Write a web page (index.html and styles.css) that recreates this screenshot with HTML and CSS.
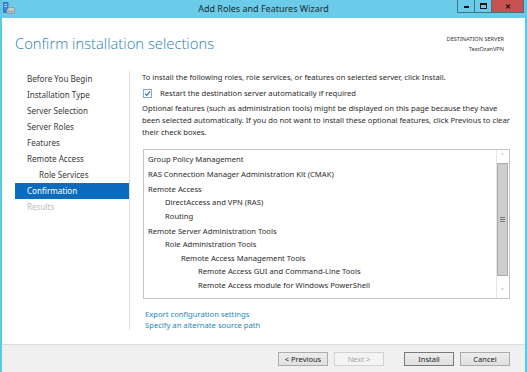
FILE: index.html
```html
<!DOCTYPE html>
<html lang="en">
<head>
    <meta charset="UTF-8">
    <meta name="viewport" content="width=device-width, initial-scale=1.0">
    <title>Add Roles and Features Wizard</title>
    <link rel="stylesheet" href="styles.css">
</head>
<body>
    <div class="window">
        <div class="titlebar">
            <svg class="app-icon" width="12" height="12" viewBox="0 0 12 12">
                <rect x="0.5" y="0.5" width="4.5" height="10" fill="#3d86d6" stroke="#1f5fa8" stroke-width="0.6"/>
                <rect x="1.3" y="2" width="2.8" height="0.8" fill="#cfe6ff"/>
                <rect x="1.3" y="4" width="2.8" height="0.8" fill="#cfe6ff"/>
                <path d="M4 7.5 L6 5.5 H11 L11.5 7.5 V11.5 H4 Z" fill="#c9ced4" stroke="#7d858e" stroke-width="0.6"/>
                <rect x="5" y="8.5" width="5.5" height="2" fill="#9aa3ad"/>
            </svg>
            <div class="title">Add Roles and Features Wizard</div>
            <div class="controls">
                <span class="ctl min"><i></i></span>
                <span class="ctl max"><i></i></span>
                <span class="ctl close">&#x2715;</span>
            </div>
        </div>

        <div class="client">
            <div class="header">
                <h1>Confirm installation selections</h1>
                <div class="dest">
                    <div>DESTINATION SERVER</div>
                    <div>TestOzanVPN</div>
                </div>
            </div>

            <div class="main">
                <ul class="nav">
                    <li>Before You Begin</li>
                    <li>Installation Type</li>
                    <li>Server Selection</li>
                    <li>Server Roles</li>
                    <li>Features</li>
                    <li>Remote Access</li>
                    <li class="sub">Role Services</li>
                    <li class="active">Confirmation</li>
                    <li class="disabled">Results</li>
                </ul>

                <div class="content">
                    <p class="intro">To install the following roles, role services, or features on selected server, click Install.</p>
                    <label class="check">
                        <svg width="9" height="9" viewBox="0 0 9 9">
                            <rect x="0.5" y="0.5" width="8" height="8" fill="#fff" stroke="#8aa9c8"/>
                            <path d="M2 4.6 L3.8 6.4 L7.1 2.4" fill="none" stroke="#2c6cb0" stroke-width="1.1"/>
                        </svg>
                        Restart the destination server automatically if required
                    </label>
                    <p class="note">Optional features (such as administration tools) might be displayed on this page because they have been selected automatically. If you do not want to install these optional features, click Previous to clear their check boxes.</p>

                    <div class="selection">
                        <ul class="tree">
                            <li class="group">Group Policy Management</li>
                            <li class="group">RAS Connection Manager Administration Kit (CMAK)</li>
                            <li class="group">Remote Access</li>
                            <li class="l2">DirectAccess and VPN (RAS)</li>
                            <li class="l2">Routing</li>
                            <li class="group">Remote Server Administration Tools</li>
                            <li class="l2">Role Administration Tools</li>
                            <li class="l3">Remote Access Management Tools</li>
                            <li class="l4">Remote Access GUI and Command-Line Tools</li>
                            <li class="l4">Remote Access module for Windows PowerShell</li>
                        </ul>
                        <div class="scrollbar">
                            <div class="arrow">&#x2C4;</div>
                            <div class="thumb"><i></i></div>
                            <div class="track"></div>
                            <div class="arrow">&#x2C5;</div>
                        </div>
                    </div>

                    <div class="links">
                        <a href="#">Export configuration settings</a>
                        <a href="#">Specify an alternate source path</a>
                    </div>
                </div>
            </div>

            <div class="footer">
                <button class="btn">&lt; Previous</button>
                <button class="btn" disabled>Next &gt;</button>
                <button class="btn default install">Install</button>
                <button class="btn">Cancel</button>
            </div>
        </div>
    </div>
</body>
</html>
```

FILE: styles.css
```css
body {
    margin: 0;
    font-family: "Noto Sans", "Open Sans", sans-serif;
    background-color: #6ccbe8;
}

.window {
    width: 527px;
    height: 372px;
    box-sizing: border-box;
    border-left: 2px solid #5fc6e6;
    border-right: 2px solid #5fc6e6;
    background-color: #6ccbe8;
    display: flex;
    flex-direction: column;
}

/* title bar */
.titlebar {
    height: 19px;
    display: grid;
    grid-template-columns: 1fr auto 1fr;
    align-items: start;
}

.app-icon {
    margin: 2px 0 0 1px;
}

.title {
    font-size: 9px;
    line-height: 18px;
    color: #1d2a33;
}

.controls {
    justify-self: end;
    display: flex;
    margin-right: 1px;
    border: 1px solid #3d7487;
    border-top: none;
}

.ctl {
    width: 17px;
    height: 12px;
    box-sizing: border-box;
    border-right: 1px solid #3d7487;
    display: flex;
    align-items: center;
    justify-content: center;
}

.ctl.min i {
    width: 5px;
    height: 2px;
    margin-top: 2px;
    background-color: #111;
}

.ctl.max i {
    width: 5px;
    height: 3px;
    border: 1px solid #111;
    border-top-width: 2px;
}

.ctl.close {
    width: 31px;
    border-right: none;
    background-color: #c75050;
    color: #111;
    font-size: 7px;
    font-weight: bold;
}

/* client area */
.client {
    flex: 1;
    display: flex;
    flex-direction: column;
    background-color: #fff;
}

.header {
    height: 51px;
    display: flex;
    justify-content: space-between;
    align-items: flex-start;
    padding: 0 21px 0 13px;
}

h1 {
    margin: 14px 0 0;
    font-family: "Open Sans", "Noto Sans", sans-serif;
    font-weight: 300;
    font-size: 14.8px;
    line-height: 22px;
    color: #2a7eab;
}

.dest {
    margin-top: 16px;
    text-align: right;
    font-size: 5.6px;
    line-height: 10px;
    color: #333;
}

.main {
    flex: 1;
    display: flex;
    padding-bottom: 14px;
}

.nav {
    list-style: none;
    margin: 2px 0 0 13px;
    padding: 0;
    width: 114px;
}

.nav li {
    height: 16px;
    line-height: 16px;
    padding-left: 12px;
    font-size: 8.1px;
    color: #3a3a3a;
}

.nav li.sub {
    padding-left: 24px;
}

.nav li.active {
    background-color: #0b6cbd;
    color: #fff;
}

.nav li.disabled {
    color: #bdbdbd;
}

.content {
    flex: 1;
    margin-top: 2px;
    border-left: 1px solid #dedede;
    padding: 0 15px 0 12px;
    font-size: 7.65px;
    color: #2b2b2b;
}

.intro {
    margin: 0;
    line-height: 12px;
}

.check {
    display: flex;
    align-items: center;
    gap: 8px;
    margin: 4px 0 0 1px;
    height: 12px;
}

.note {
    margin: 3px -6px 0 0;
    line-height: 12px;
}

.selection {
    margin-top: 11px;
    margin-left: 1px;
    height: 150px;
    box-sizing: border-box;
    border: 1px solid #c4c4c4;
    display: flex;
}

.tree {
    flex: 1;
    list-style: none;
    margin: 0;
    padding: 1px 0 0 4px;
}

.tree li {
    line-height: 13.5px;
}

.tree li.group {
    margin-top: 1.5px;
}

.tree li.l2 {
    padding-left: 17px;
}

.tree li.l3 {
    padding-left: 33px;
}

.tree li.l4 {
    padding-left: 50px;
}

.scrollbar {
    width: 11px;
    margin-right: 1px;
    display: flex;
    flex-direction: column;
    border-left: 1px solid #e6e6e6;
}

.arrow {
    height: 13px;
    text-align: center;
    font-size: 8px;
    line-height: 13px;
    color: #7a7a7a;
}

.thumb {
    height: 113px;
    box-sizing: border-box;
    background-color: #cdcdcd;
    border: 1px solid #ababab;
    display: flex;
    align-items: center;
    justify-content: center;
}

.thumb i {
    width: 5px;
    height: 3px;
    border-top: 1px solid #777;
    border-bottom: 1px solid #777;
    background: linear-gradient(#cdcdcd 1px, #777 1px, #777 2px, #cdcdcd 2px);
}

.track {
    flex: 1;
}

.links {
    margin-top: 10px;
    padding-left: 3px;
    display: flex;
    flex-direction: column;
}

.links a {
    line-height: 10.5px;
    color: #2189bd;
    text-decoration: none;
}

/* bottom buttons */
.footer {
    height: 29px;
    box-sizing: border-box;
    background-color: #f0f0f0;
    border-top: 1px solid #dcdcdc;
    display: flex;
    align-items: flex-start;
    justify-content: flex-end;
    padding: 7px 15px 0 0;
    gap: 6px;
}

.btn {
    width: 50px;
    height: 14px;
    padding: 0;
    font-family: inherit;
    font-size: 7.5px;
    color: #222;
    background: linear-gradient(#ececec, #e0e0e0);
    border: 1px solid #acacac;
}

.btn:disabled {
    color: #a3a3a3;
    background: #f4f4f4;
    border-color: #d2d2d2;
}

.btn.install {
    margin-left: 14px;
    border-color: #7a7a7a;
}
```
